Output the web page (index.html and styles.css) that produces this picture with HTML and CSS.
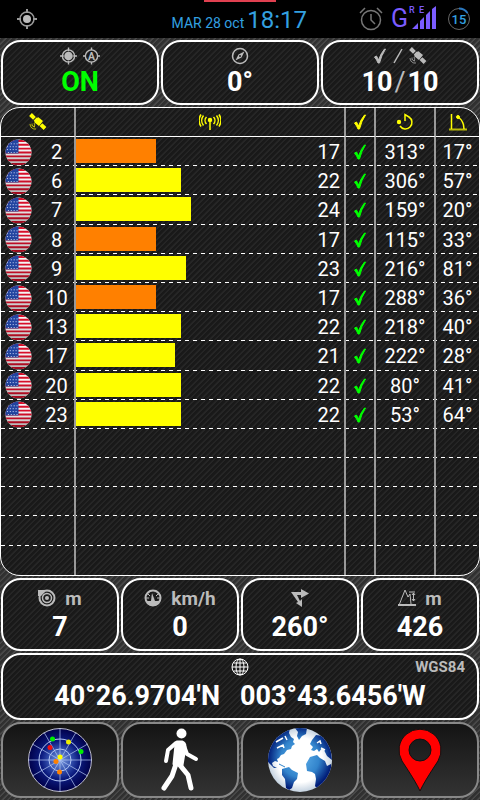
FILE: index.html
```html
<!DOCTYPE html>
<html lang="en">

<head>
    <meta charset="UTF-8">
    <meta name="viewport" content="width=device-width, initial-scale=1.0">
    <title>GPS Status</title>

    <link rel="stylesheet" href="styles.css">
</head>

<body>
    <!-- shared shapes -->
    <svg class="defs" width="0" height="0" aria-hidden="true">
        <defs>
            <clipPath id="flagClip"><circle cx="14" cy="14" r="13.500" /></clipPath>
            <linearGradient id="flagShade" x1="0" y1="0" x2="0" y2="1">
                <stop offset="0.4" stop-color="#000" stop-opacity="0" />
                <stop offset="1" stop-color="#000" stop-opacity="0.3" />
            </linearGradient>
            <radialGradient id="radarBg">
                <stop offset="0" stop-color="#7f9fe0" />
                <stop offset="0.35" stop-color="#3552b0" />
                <stop offset="0.6" stop-color="#0c1c80" />
                <stop offset="1" stop-color="#00004a" />
            </radialGradient>
            <radialGradient id="sea" cx="0.5" cy="0.5" r="0.5">
                <stop offset="0.7" stop-color="#ffffff" />
                <stop offset="1" stop-color="#c4d2e0" />
            </radialGradient>
            <radialGradient id="land" gradientUnits="userSpaceOnUse" cx="32" cy="30" r="32">
                <stop offset="0" stop-color="#5fb0ea" />
                <stop offset="0.6" stop-color="#3284cc" />
                <stop offset="1" stop-color="#001c78" />
            </radialGradient>
            <clipPath id="globeClip"><circle cx="32" cy="32" r="32" /></clipPath>
        </defs>
        <symbol id="flag" viewBox="0 0 28 28">
            <g clip-path="url(#flagClip)">
                <rect width="28" height="28" fill="#f4f4f4" />
                <path d="M0 2h28M0 6h28M0 10h28M0 14h28M0 18h28M0 22h28M0 26h28" stroke="#d80f2a" stroke-width="2" />
                <rect width="14" height="15" fill="#2244a0" />
                <path d="M3 5h11M2 8h12M2 11h12M3 14h11" stroke="#dfe6ff" stroke-width="1" stroke-dasharray="1 2" />
                <rect width="28" height="28" fill="url(#flagShade)" />
            </g>
        </symbol>
        <symbol id="sat" viewBox="0 0 18 18">
            <path d="M1.500 1.500L16 15.500" stroke="currentColor" stroke-width="4" stroke-dasharray="5.500 1 7 1 6" />
            <path d="M9 4l5 4-4 5-5-4z" fill="currentColor" />
            <path d="M5 10a3 3 0 0 1 0 4M3 10.500v2M1 11a5 5 0 0 0 6 5M3 12a3 3 0 0 0 3 2" fill="none" stroke="currentColor" opacity="0.7" />
        </symbol>
        <symbol id="check" viewBox="0 0 14 18">
            <path d="M1.500 10l2-1 2 4Q8 6 11.500 2h1Q8.500 8 6.500 16h-1.500Q4 13 1.500 10z" fill="currentColor" stroke="currentColor" />
        </symbol>
    </svg>

    <header class="status">
        <svg class="status-gps" width="20" height="20" viewBox="0 0 20 20">
            <circle cx="10" cy="10" r="7" fill="none" stroke="#999" stroke-width="1.500" />
            <circle cx="10" cy="10" r="4" fill="#bbb" />
            <path d="M10 0v4M10 16v4M0 10h4M16 10h4" stroke="#999" stroke-width="2" />
        </svg>
        <span class="status-date">MAR 28 oct</span>
        <span class="status-time">18:17</span>
        <svg class="status-alarm" width="24" height="24" viewBox="0 0 24 24" fill="none" stroke="#777" stroke-width="1.500">
            <circle cx="12" cy="13" r="9.500" />
            <path d="M12 7v6l4 4M1 6l5-5M23 6l-5-5" />
        </svg>
        <svg class="status-signal" width="46" height="34" viewBox="0 0 46 34">
            <g fill="#7b5cff" font-family="Roboto, sans-serif">
                <text x="0" y="25" font-size="25">G</text>
                <text x="18" y="11" font-size="9" font-weight="500">R</text>
                <text x="28" y="11" font-size="9" font-weight="500">E</text>
                <path d="M21 27l6-6v6zM29 27v-8l4-4v12zM35 27V13l4-4v18zM41 27V7l4-3v23z" />
            </g>
        </svg>
        <svg class="status-battery" width="24" height="24" viewBox="0 0 24 24">
            <circle cx="12" cy="12" r="10.500" fill="none" stroke="#666" />
            <path d="M12 1.500a10.500 10.500 0 0 1 8.500 4.500" fill="none" stroke="#2a78c0" stroke-width="2" />
            <text x="12" y="17" font-size="13" font-weight="500" text-anchor="middle" fill="#33a0e0" font-family="Roboto, sans-serif">15</text>
        </svg>
    </header>

    <main class="main">
        <section class="row">
            <div class="box">
                <div class="label">
                    <svg width="17" height="18" viewBox="0 0 18 18">
                        <circle cx="9" cy="9" r="6.500" fill="none" stroke="currentColor" stroke-width="1.500" />
                        <circle cx="9" cy="9" r="4.500" fill="currentColor" />
                        <path d="M9 0v4M9 14v4M0 9h4M14 9h4" stroke="currentColor" stroke-width="1.500" />
                    </svg>
                    <svg width="17" height="18" viewBox="0 0 18 18">
                        <circle cx="9" cy="9" r="6.500" fill="none" stroke="currentColor" stroke-width="1.500" />
                        <path d="M9 0v3M9 15v3M0 9h3M15 9h3" stroke="currentColor" stroke-width="1.500" />
                        <text x="9" y="13" font-size="11" font-weight="700" text-anchor="middle" fill="currentColor" font-family="Roboto, sans-serif">A</text>
                    </svg>
                </div>
                <div class="value on">ON</div>
            </div>
            <div class="box">
                <div class="label">
                    <svg width="18" height="18" viewBox="0 0 18 18">
                        <circle cx="9" cy="9" r="7.500" fill="none" stroke="currentColor" stroke-width="1.500" />
                        <path d="M13.500 4.500l-3 6-6 3 3-6z" fill="currentColor" />
                        <circle cx="9" cy="9" r="1" fill="#222" />
                    </svg>
                </div>
                <div class="value">0°</div>
            </div>
            <div class="box">
                <div class="label">
                    <svg width="14" height="18"><use href="#check" /></svg>
                    <svg width="10" height="18" viewBox="0 0 10 18"><path d="M1 16L9 2" stroke="currentColor" stroke-width="1.500" /></svg>
                    <svg width="18" height="18"><use href="#sat" /></svg>
                </div>
                <div class="value">10<span class="slash">/</span>10</div>
            </div>
        </section>

        <table class="sats">
            <colgroup>
                <col class="col-id">
                <col>
                <col class="col-used">
                <col class="col-azimuth">
                <col class="col-elevation">
            </colgroup>
            <thead>
                <tr>
                    <th aria-label="Satellite"><svg width="18" height="18"><use href="#sat" /></svg></th>
                    <th aria-label="Signal">
                        <svg width="22" height="18" viewBox="0 0 22 18" fill="none" stroke="currentColor" stroke-width="1.500">
                            <circle cx="11" cy="7" r="1.500" fill="currentColor" />
                            <path d="M11 8v9M7.500 4a5 5 0 0 0 0 7M14.500 4a5 5 0 0 1 0 7M4.500 2.500a8 8 0 0 0 0 10M17.500 2.500a8 8 0 0 1 0 10M2 1.500a11 11 0 0 0 0 12M20 1.500a11 11 0 0 1 0 12" />
                        </svg>
                    </th>
                    <th aria-label="Used"><svg width="14" height="18"><use href="#check" /></svg></th>
                    <th aria-label="Azimuth">
                        <svg width="18" height="18" viewBox="0 0 18 18">
                            <path d="M9 8V1.500l4 2.500M13 4a6.500 6.500 0 1 1-9 9" fill="none" stroke="currentColor" stroke-width="1.500" />
                            <circle cx="3" cy="9" r="2.200" fill="currentColor" />
                        </svg>
                    </th>
                    <th aria-label="Elevation">
                        <svg width="18" height="18" viewBox="0 0 18 18" fill="none" stroke="currentColor">
                            <path d="M2.500 1v15M9 4q6 4 6 12" stroke-width="1.500" />
                            <path d="M0 16.500h18" stroke-width="2" opacity="0.700" />
                            <circle cx="9" cy="4" r="1.500" fill="currentColor" />
                        </svg>
                    </th>
                </tr>
            </thead>
            <tbody id="sat_list"></tbody>
        </table>

        <section class="row readings">
            <div class="box">
                <div class="label">
                    <svg width="18" height="18" viewBox="0 0 18 18">
                        <circle cx="9" cy="9" r="7.500" fill="none" stroke="currentColor" stroke-width="2" />
                        <circle cx="9" cy="9" r="4.500" fill="none" stroke="currentColor" stroke-width="1.500" />
                        <circle cx="9" cy="9" r="2" fill="currentColor" />
                        <path d="M0 1h7v2L3 7H0z" fill="currentColor" />
                    </svg>
                    m
                </div>
                <div class="value">7</div>
            </div>
            <div class="box">
                <div class="label">
                    <svg width="18" height="18" viewBox="0 0 18 18">
                        <circle cx="9" cy="9" r="7.500" fill="none" stroke="currentColor" stroke-width="2" />
                        <path d="M2 12h5l1-8 3 8h5q-2 5-7 5t-7-5z" fill="currentColor" />
                        <path d="M4 5l2 2M14 5l-2 2M2 9h3M13 9h3" stroke="currentColor" />
                    </svg>
                    km/h
                </div>
                <div class="value">0</div>
            </div>
            <div class="box">
                <div class="label">
                    <svg width="18" height="18" viewBox="0 0 18 18" fill="currentColor">
                        <path d="M0 3h10V0l8 4.500L10 9V6H6l3 6 2-2v8l-6-4 2-1z" />
                    </svg>
                </div>
                <div class="value">260°</div>
            </div>
            <div class="box">
                <div class="label">
                    <svg width="18" height="18" viewBox="0 0 18 18" fill="none" stroke="currentColor">
                        <path d="M1.500 15L7 1l3 7 2-3 1 10M11 3h6M15.500 4v8M14 6l1.500-2L17 6M14 10l1.500 2 1.500-2" />
                        <path d="M0 16h18" stroke-width="2" />
                    </svg>
                    m
                </div>
                <div class="value">426</div>
            </div>
        </section>

        <section class="box position">
            <div class="label">
                <svg width="18" height="18" viewBox="0 0 18 18" fill="none" stroke="#fff">
                    <circle cx="9" cy="9" r="8" />
                    <ellipse cx="9" cy="9" rx="4" ry="8" />
                    <path d="M9 1v16M1 9h16M2.500 5h13M2.500 13h13" />
                </svg>
                <span class="datum">WGS84</span>
            </div>
            <div class="value coords"><span>40°26.9704'N</span><span>003°43.6456'W</span></div>
        </section>

        <nav class="row">
            <button class="tab" type="button" aria-label="Radar">
                <svg width="64" height="64" viewBox="0 0 64 64">
                    <circle cx="32" cy="32" r="31.500" fill="url(#radarBg)" stroke="#bbc" />
                    <g fill="none" stroke="#b4c7f4">
                        <path d="M32 0v64M0 32h64M16 4.300l32 55.400M48 4.300L16 59.700M4.300 16l55.400 32M4.300 48l55.400-32" opacity="0.700" />
                        <circle cx="32" cy="32" r="21" />
                        <circle cx="32" cy="32" r="11" />
                    </g>
                    <circle cx="24.500" cy="11" r="2.500" fill="#0e0" />
                    <circle cx="22" cy="19.500" r="2.500" fill="#f01010" />
                    <circle cx="40.500" cy="14" r="2.500" fill="#ee0" />
                    <circle cx="53" cy="23.500" r="2.500" fill="#0e0" />
                    <circle cx="32" cy="29" r="2.500" fill="#ff0" />
                    <circle cx="28" cy="33.500" r="2.500" fill="#ff8000" />
                    <circle cx="31.500" cy="44" r="2.500" fill="#ff8000" />
                </svg>
            </button>
            <button class="tab" type="button" aria-label="Walk">
                <svg width="64" height="64" viewBox="0 0 64 64" fill="none" stroke="#fff" stroke-linecap="round" stroke-linejoin="round">
                    <circle cx="33.500" cy="5.500" r="5" fill="#fff" stroke="none" />
                    <path d="M29 14h5q3 1 3 5l-3 18-8-1 2-19z" fill="#fff" stroke-width="3" />
                    <path d="M28 15l-8 7-2 11M36 18l3 8 9 5" stroke-width="4" />
                    <path d="M28 36l-4 12-8 12M31 36l9 11 3 13" stroke-width="5" />
                </svg>
            </button>
            <button class="tab" type="button" aria-label="Map">
                <svg width="64" height="64" viewBox="0 0 64 64">
                    <g clip-path="url(#globeClip)">
                        <rect width="64" height="64" fill="url(#sea)" />
                        <g fill="url(#land)">
                            <path d="M0 34V14L13 2l9-2-1 5 2 4 3 2-1 3 2 2-3 2-1 3-4 1-3 4-3 1-2 3-2 1 1 3-3-1-3 2 1 3 4 2-3 0z" />
                            <path d="M27 0h12l-1 6-4 2-3 4-2-4 1-4z" />
                            <path d="M14 41l7-2 3 3 6 3-1 6-3 3-2 6-3 2-3-2-1-9-3-4z" />
                            <path d="M42 29l7-2 3 3 5 3 2 5 4-2v16L50 62l-3-4 1-7-1-5-3-2-5-1-1-7z" />
                            <path d="M43 22l2-3-3-3 2-4 4-5 7 1q9 9 9 24l-5-4-3-6-2-2-3 4-2-3-3 2z" />
                        </g>
                        <path d="M8 14l7-4M9 20l6-3 1 3M17 8l2 4M49 15l3-2 1 3M53 20l4 2" stroke="#fff" stroke-width="1.500" fill="none" />
                        <path d="M11 36l6 3" stroke="#3284cc" />
                    </g>
                </svg>
            </button>
            <button class="tab" type="button" aria-label="Place">
                <svg width="64" height="64" viewBox="0 0 64 64">
                    <path d="M32 63Q28 54 14 33A21 21 0 1 1 50 33Q36 54 32 63zM32 11a11 11 0 1 0 0 22 11 11 0 0 0 0-22z" fill="#f00" fill-rule="evenodd" stroke="#111" />
                </svg>
            </button>
        </nav>
    </main>

    <script>
        // id, signal, azimuth, elevation
        var sats = [
            [2, 17, 313, 17],
            [6, 22, 306, 57],
            [7, 24, 159, 20],
            [8, 17, 115, 33],
            [9, 23, 216, 81],
            [10, 17, 288, 36],
            [13, 22, 218, 40],
            [17, 21, 222, 28],
            [20, 22, 80, 41],
            [23, 22, 53, 64]
        ]
        // bar widths in % of the signal column
        var bars = { 17: 30, 21: 37, 22: 39, 23: 41, 24: 43 }
        var rows = 15

        var html = ''
        for (var i = 0; i < rows; i++) {
            var s = sats[i]
            if (s) {
                var color = s[1] < 20 ? 'weak' : 'good'
                html += '<tr><td><div class="id"><svg width="27" height="27"><use href="#flag" /></svg><span>' + s[0] + '</span></div></td>'
                    + '<td><div class="signal"><div class="bar ' + color + '" style="width: ' + bars[s[1]] + '%"></div><span>' + s[1] + '</span></div></td>'
                    + '<td class="used"><svg width="14" height="18"><use href="#check" /></svg></td>'
                    + '<td>' + s[2] + '°</td><td>' + s[3] + '°</td></tr>'
            } else {
                html += '<tr><td></td><td></td><td></td><td></td><td></td></tr>'
            }
        }
        document.querySelector('#sat_list').innerHTML = html
    </script>
</body>

</html>
```
FILE: styles.css
```css
* {
    box-sizing: border-box;
}

body {
    margin: 0;
    min-height: 100vh;
    display: flex;
    flex-direction: column;
    font-family: Roboto, "Liberation Sans", sans-serif;
    color: white;
    background: repeating-linear-gradient(135deg, #303030 0 2px, #484848 3px 4px);
}

svg {
    display: block;
    flex: none;
}

.defs {
    position: absolute;
}

.status {
    height: 38px;
    display: flex;
    align-items: center;
    padding: 0 9px 0 17px;
    background: linear-gradient(#e04050, #e04050) 204px 0 / 72px 2px no-repeat black;
}

.status-date {
    margin-left: auto;
    padding-top: 8px;
    font-size: 14px;
    color: #33a0e0;
}

.status-time {
    margin-left: 3px;
    padding-top: 2px;
    font-size: 24px;
    color: #33a0e0;
}

.status-alarm {
    margin-left: 52px;
}

.status-signal {
    margin-left: 8px;
}

.status-battery {
    margin-left: 10px;
}

.main {
    flex: 1;
    display: flex;
    flex-direction: column;
    gap: 2px;
    padding: 2px 0;
}

.row {
    display: flex;
    gap: 2px;
    padding: 0 1px;
}

.box {
    flex: 1;
    border: 2px solid white;
    border-radius: 20px;
    padding: 4px 0;
    background: repeating-linear-gradient(135deg, #191919 0 2px, #262626 3px 4px);
}

.label {
    height: 20px;
    display: flex;
    justify-content: center;
    align-items: center;
    gap: 6px;
    font-size: 19px;
    font-weight: 700;
    color: #bbb;
}

.value {
    font-size: 27px;
    line-height: 33px;
    font-weight: 700;
    text-align: center;
}

.on {
    color: #00ff00;
}

.slash {
    font-weight: 400;
    color: #bbb;
    padding: 0 2px;
}

.readings .box {
    padding: 8px 0 5px;
}

.readings .label {
    gap: 9px;
    margin-bottom: 3px;
}

/* satellites */
.sats {
    flex: 1;
    width: 100%;
    table-layout: fixed;
    border-collapse: separate;
    border-spacing: 0;
    border: 1px solid white;
    border-radius: 20px;
    background: repeating-linear-gradient(135deg, #191919 0 2px, #262626 3px 4px);
    font-size: 20px;
    line-height: 26px;
    text-align: center;
}

.col-id {
    width: 75px;
}

.col-used {
    width: 30px;
}

.col-azimuth {
    width: 60px;
}

.col-elevation {
    width: 43px;
}

.sats th {
    height: 29px;
    padding: 0;
    color: yellow;
    border-bottom: 1px solid white;
}

.sats th svg {
    margin: 0 auto;
}

.sats td {
    height: 29px;
    padding: 1px 0 0;
}

.sats th:not(:last-child),
.sats td:not(:last-child) {
    border-right: 2px solid #999;
}

.sats tbody tr:not(:last-child) {
    background: repeating-linear-gradient(90deg, white 0 4px, transparent 4px 8px) 0 100% / 100% 1px no-repeat;
}

.id {
    display: flex;
    align-items: center;
    padding-left: 4px;
}

.id span {
    flex: 1;
    padding-left: 7px;
    text-align: center;
}

.signal {
    display: flex;
    justify-content: space-between;
}

.signal span {
    padding-right: 4px;
}

.bar {
    height: 24px;
}

.weak {
    background-color: #ff8000;
}

.good {
    background-color: yellow;
}

.used svg {
    margin: 0 auto;
    color: #00ff00;
}

/* position */
.position {
    flex: none;
    margin: 0 1px;
    padding: 2px 12px 5px;
}

.position .label {
    display: grid;
    grid-template-columns: 1fr auto 1fr;
    margin-bottom: 3px;
}

.position .label svg {
    grid-column: 2;
}

.datum {
    font-size: 15px;
    text-align: right;
}

.coords {
    display: flex;
    justify-content: center;
    gap: 20px;
}

.tab {
    flex: 1;
    height: 76px;
    display: flex;
    justify-content: center;
    align-items: center;
    padding: 0;
    border: 2px solid #888;
    border-radius: 20px;
    background: linear-gradient(#141414, #333);
    cursor: pointer;
}
```
